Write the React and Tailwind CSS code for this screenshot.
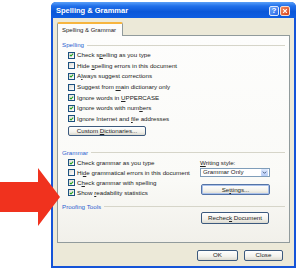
import React from "react";

function Check({ checked }) {
  return (
    <span className="w-[7px] h-[7px] shrink-0 border border-[#1c5180] bg-[linear-gradient(135deg,#dcdcd4,#ffffff)] flex items-center justify-center">
      {checked && (
        <svg viewBox="0 0 7 7" className="w-[6px] h-[6px]">
          <path d="M1.2 3.4 L2.8 5 L5.8 1.6" stroke="#21a121" strokeWidth="1.5" fill="none" />
        </svg>
      )}
    </span>
  );
}

function Row({ checked, children, h = "h-[10.6px]" }) {
  return (
    <div className={`${h} flex items-center gap-[2px]`}>
      <Check checked={checked} />
      <span className="text-[6.2px] leading-none text-[#222] whitespace-nowrap">{children}</span>
    </div>
  );
}

function Header({ children }) {
  return (
    <div className="h-[10px] flex items-center pr-[4px]">
      <span className="text-[6.2px] leading-none text-[#2f5fd0] whitespace-nowrap">{children}</span>
      <span className="flex-1 h-px bg-[#d6d5c9] ml-[3px]" />
    </div>
  );
}

function Btn({ className = "", children }) {
  return (
    <div
      className={`flex items-center justify-center rounded-[2px] border border-[#3c5a7e] bg-[linear-gradient(180deg,#ffffff,#f3f2ec_60%,#dcdad0)] text-[6.2px] leading-none text-[#222] whitespace-nowrap ${className}`}
    >
      <span>{children}</span>
    </div>
  );
}

export default function App() {
  return (
    <div className="relative w-[300px] h-[272px] bg-white overflow-hidden font-['Liberation_Sans',Arial,sans-serif]">
      <div className="pt-[2px] pl-[51px]">
        <div className="w-[245px] h-[266px] flex flex-col rounded-t-[5px] bg-[#1554d8] px-[2px] pb-[2px]">
          {/* title bar */}
          <div className="h-[16px] -mx-[2px] rounded-t-[5px] bg-[linear-gradient(180deg,#5ba0f8_0%,#2170ea_25%,#0b57d8_60%,#0f5ee2_100%)] flex items-center pl-[5px] pr-[6px]">
            <span className="text-white font-bold text-[7.5px] leading-none whitespace-nowrap mt-[1px]">
              Spelling &amp; Grammar
            </span>
            <div className="ml-auto flex gap-[1px] mt-[2px]">
              <div className="w-[10px] h-[10px] rounded-[2px] border border-[#dfe8fb] bg-[linear-gradient(135deg,#6ea6f9,#2a68e8)] flex items-center justify-center text-white font-bold text-[8px] leading-none">
                ?
              </div>
              <div className="w-[10px] h-[10px] rounded-[2px] border border-[#f6dccf] bg-[linear-gradient(135deg,#f08a5c,#d9421c)] flex items-center justify-center">
                <svg viewBox="0 0 8 8" className="w-[6px] h-[6px]">
                  <path d="M1.5 1.5 L6.5 6.5 M6.5 1.5 L1.5 6.5" stroke="#fff" strokeWidth="1.6" />
                </svg>
              </div>
            </div>
          </div>

          {/* client */}
          <div className="flex-1 bg-[#ece9d8] flex flex-col px-[4px] pt-[4px]">
            <div className="flex">
              <div className="relative z-10 -mb-px h-[14px] w-[66px] border-x border-[#919b9c] border-t-[2px] border-t-[#f7b53e] rounded-t-[2px] bg-[#fcfcfb] flex items-center pl-[4px]">
                <span className="text-[6px] leading-none text-[#222] whitespace-nowrap">Spelling &amp; Grammar</span>
              </div>
            </div>
            <div className="h-[208px] border border-[#919b9c] bg-[linear-gradient(180deg,#fdfdfc_0%,#fafaf7_70%,#f1f0ea_100%)] pl-[4px] pt-[4px] flex flex-col">
              <Header>Spelling</Header>
              <div className="pl-[6px] flex flex-col">
                <Row checked>
                  Check s<u>p</u>elling as you type
                </Row>
                <Row>
                  Hide <u>s</u>pelling errors in this document
                </Row>
                <Row checked>
                  A<u>l</u>ways suggest corrections
                </Row>
                <Row>
                  Suggest from <u>m</u>ain dictionary only
                </Row>
                <Row checked>
                  Ignore words in <u>U</u>PPERCASE
                </Row>
                <Row checked>
                  Ignore words with num<u>b</u>ers
                </Row>
                <Row checked>
                  Ignore Internet and <u>f</u>ile addresses
                </Row>
                <Btn className="mt-[1.5px] w-[78px] h-[10.5px]">
                  Custom <u>D</u>ictionaries...
                </Btn>
              </div>

              <div className="mt-[11.5px]">
                <Header>Grammar</Header>
              </div>
              <div className="flex">
                <div className="w-[138px] pl-[6px] flex flex-col">
                  <Row checked h="h-[10px]">
                    Check <u>g</u>rammar as you type
                  </Row>
                  <Row h="h-[10px]">
                    Hi<u>d</u>e grammatical errors in this document
                  </Row>
                  <Row checked h="h-[10px]">
                    C<u>h</u>eck grammar with spelling
                  </Row>
                  <Row checked h="h-[10px]">
                    Show <u>r</u>eadability statistics
                  </Row>
                </div>
                <div className="w-[70px] flex flex-col">
                  <div className="h-[10px] flex items-center">
                    <span className="text-[6.2px] leading-none text-[#222] whitespace-nowrap">
                      <u>W</u>riting style:
                    </span>
                  </div>
                  <div className="h-[9px] border border-[#7f9db9] bg-white flex items-center">
                    <span className="pl-[2px] text-[6.2px] leading-none text-[#222] whitespace-nowrap">Grammar Only</span>
                    <div className="ml-auto mr-px w-[7px] h-[7px] rounded-[1px] bg-[linear-gradient(180deg,#dde8fd,#b6cdf8)] flex items-center justify-center">
                      <svg viewBox="0 0 6 6" className="w-[5px] h-[5px]">
                        <path d="M1 2 L3 4 L5 2" stroke="#4d6185" strokeWidth="1.2" fill="none" />
                      </svg>
                    </div>
                  </div>
                  <Btn className="mt-[7.5px] ml-[1px] w-[69px] h-[11px] border-[#5474a6] shadow-[inset_0_0_0_1px_#a9c0ea]">
                    Se<u>t</u>tings...
                  </Btn>
                </div>
              </div>

              <div className="mt-[4px]">
                <Header>Proofing Tools</Header>
              </div>
              <div className="flex">
                <div className="w-[138px]" />
                <Btn className="mt-[0.5px] ml-[1px] w-[68px] h-[12px]">
                  Rechec<u>k</u> Document
                </Btn>
              </div>
            </div>

            <div className="flex justify-end gap-[6px] pr-[7px] mt-[7px]">
              <Btn className="w-[41px] h-[11px]">OK</Btn>
              <Btn className="w-[39px] h-[11px]">Close</Btn>
            </div>
          </div>
        </div>
      </div>

      {/* red arrow overlay */}
      <svg className="absolute left-0 top-[166px] w-[62px] h-[62px]" viewBox="0 0 62 62">
        <polygon points="0,16 38,16 38,2 60,31 38,60 38,46 0,46" fill="#f0321e" />
      </svg>
    </div>
  );
}
